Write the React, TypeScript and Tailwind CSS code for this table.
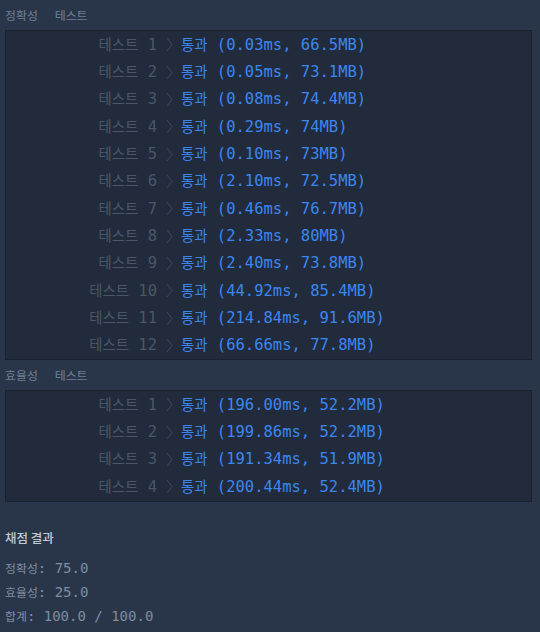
import React from "react";

const MONO = "font-['DejaVu_Sans_Mono','Noto_Sans_CJK_KR',monospace]";

// Hangul in the original falls back to a narrower Korean face; emulate the advance width
function K({ children, wide }: { children: React.ReactNode; wide?: boolean }) {
  return (
    <span className={`font-['Noto_Sans_CJK_KR',sans-serif] ${wide ? "text-[0.93em]" : "text-[0.85em]"}`}>
      {children}
    </span>
  );
}

const accuracy = [
  ["1", "0.03ms, 66.5MB"],
  ["2", "0.05ms, 73.1MB"],
  ["3", "0.08ms, 74.4MB"],
  ["4", "0.29ms, 74MB"],
  ["5", "0.10ms, 73MB"],
  ["6", "2.10ms, 72.5MB"],
  ["7", "0.46ms, 76.7MB"],
  ["8", "2.33ms, 80MB"],
  ["9", "2.40ms, 73.8MB"],
  ["10", "44.92ms, 85.4MB"],
  ["11", "214.84ms, 91.6MB"],
  ["12", "66.66ms, 77.8MB"],
];

const efficiency = [
  ["1", "196.00ms, 52.2MB"],
  ["2", "199.86ms, 52.2MB"],
  ["3", "191.34ms, 51.9MB"],
  ["4", "200.44ms, 52.4MB"],
];

function Chevron() {
  return (
    <svg width="7" height="15" viewBox="0 0 7 15" className="shrink-0">
      <path d="M1 1 L6 7.5 L1 14" fill="none" stroke="#394456" strokeWidth="1.1" />
    </svg>
  );
}

function Row({ n, result }: { n: string; result: string }) {
  return (
    <div className="flex items-center h-[27.35px] whitespace-pre">
      <span className="w-[151px] text-right text-[#4b5668]">
        <K wide>테스트</K> {n}
      </span>
      <span className="w-[24px] flex justify-center">
        <Chevron />
      </span>
      <span className="text-[#3c86ef]">
        <K wide>통과</K> ({result})
      </span>
    </div>
  );
}

function Section({ title, rows }: { title: string; rows: string[][] }) {
  return (
    <div>
      <div className="h-[30px] flex items-center text-[14px] text-[#6f7f93]">
        <span className="whitespace-pre">
          <K>{title}</K>  <K>테스트</K>
        </span>
      </div>
      <div className="bg-[#212b3c] border border-[#1a2230] text-[15.5px]">
        {rows.map(([n, r]) => (
          <Row key={n} n={n} result={r} />
        ))}
      </div>
    </div>
  );
}

export default function App() {
  return (
    <div className={`min-h-[632px] w-[540px] bg-[#29364a] pl-[5px] pr-[8px] ${MONO}`}>
      <Section title="정확성" rows={accuracy} />
      <Section title="효율성" rows={efficiency} />

      <div className="pt-[25px] text-[14px]">
        <div className="h-[24px] flex items-center text-[#c3cad4] font-['Noto_Sans_CJK_KR',sans-serif] text-[12.5px] font-medium">
          채점 결과
        </div>
        <div className="mt-[6px] text-[#7e8da1] whitespace-pre">
          <div className="h-[24px] flex items-center">
            <span><K>정확성</K>: 75.0</span>
          </div>
          <div className="h-[24px] flex items-center">
            <span><K>효율성</K>: 25.0</span>
          </div>
          <div className="h-[24px] flex items-center">
            <span><K>합계</K>: 100.0 / 100.0</span>
          </div>
        </div>
      </div>
    </div>
  );
}
